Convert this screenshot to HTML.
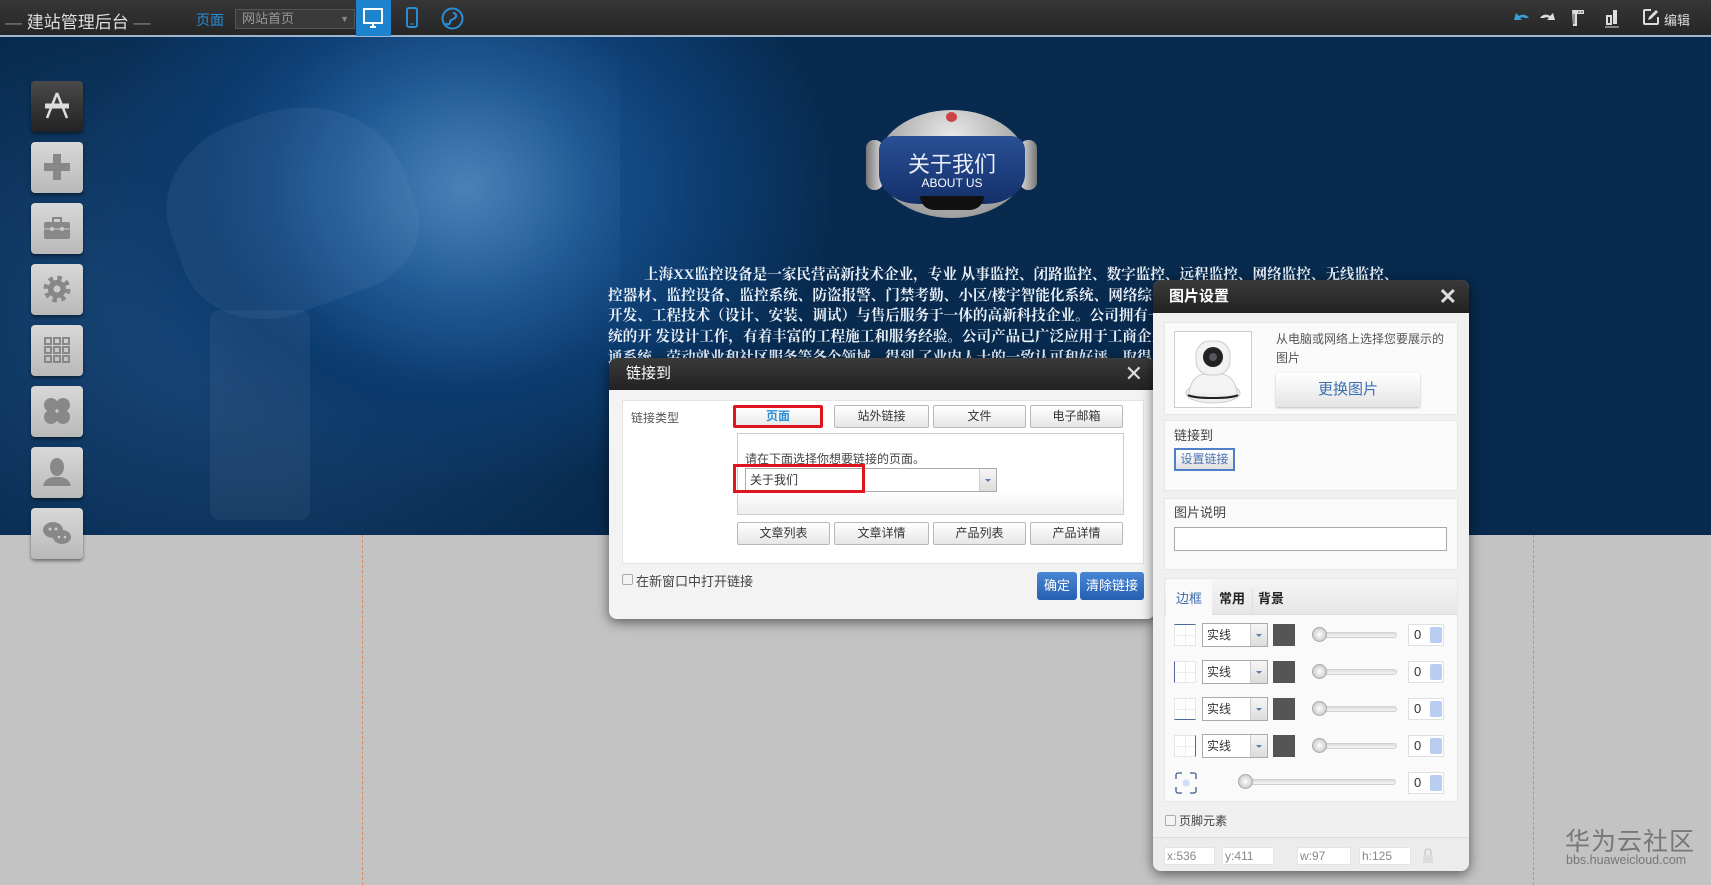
<!DOCTYPE html>
<html><head><meta charset="utf-8"><style>
*{margin:0;padding:0;box-sizing:border-box}
body{width:1711px;height:885px;overflow:hidden;position:relative;background:#c3c3c3;font-family:"Liberation Sans","Noto Sans CJK SC",sans-serif;font-size:12px;color:#333}
.a{position:absolute}
#hdr{left:0;top:0;width:1711px;height:37px;background:linear-gradient(#363636,#262626);border-bottom:2px solid #9fb6cc}
#banner{left:0;top:37px;width:1711px;height:498px;background:radial-gradient(ellipse 380px 300px at 460px 150px,#2e6aa4 0%,#17508c 35%,#0b3a6c 70%,rgba(6,40,77,0) 100%),radial-gradient(ellipse 450px 320px at 230px 280px,#1a4a7e 0%,rgba(8,45,85,0) 100%),#072a4e}
.side{left:31px;width:52px;height:51px;border-radius:4px;background:linear-gradient(#d8d8d8,#b9b9b9);box-shadow:0 2px 3px rgba(0,0,0,.45)}
.side svg{position:absolute;left:10px;top:9px}
.dash{top:535px;height:350px;border-left:1px dashed #d98c62}
.dlg{background:#f3f3f3;border-radius:8px;box-shadow:0 3px 12px rgba(0,0,0,.55);overflow:hidden}
.dt{height:32px;background:linear-gradient(#3a3a3a,#222);color:#fff;font-size:15px;line-height:32px;padding-left:17px}
.x{position:absolute;right:12px;top:0;color:#ddd;font-size:22px;line-height:32px}
.btn{position:absolute;height:23px;border:1px solid #b8b8b8;border-radius:2px;background:linear-gradient(#fff,#e6e6e6);text-align:center;line-height:21px;font-size:12px;color:#333}
.sec{position:absolute;background:#fafafa;border:1px solid #e6e6e6}
.sel{position:absolute;height:24px;border:1px solid #aaa;background:#fff;font-size:12px;line-height:22px;padding-left:4px}
.sel:after{content:"";position:absolute;right:0;top:0;width:16px;height:22px;border-left:1px solid #ccc;background:linear-gradient(#f6f6f6,#dcdcdc)}
.sel:before{content:"";position:absolute;right:5px;top:10px;border:3px solid transparent;border-top:3px solid #5a7fa8;z-index:2}
.sq{position:absolute;width:22px;height:22px;background:#555}
.sl{position:absolute;height:6px;border-radius:3px;background:linear-gradient(#ddd,#f4f4f4);border:1px solid #d0d0d0}
.kn{position:absolute;left:-4px;top:-6px;width:15px;height:15px;border-radius:50%;background:radial-gradient(#fff,#bbb);border:1px solid #aaa}
.num{position:absolute;width:36px;height:22px;background:#fff;border:1px solid #e0e0e0;font-size:13px;line-height:20px;padding-left:5px}
.num i{position:absolute;right:1px;top:2px;width:12px;height:16px;background:#b9cdf0;border-radius:2px}
.bi{position:absolute;width:22px;height:22px;border:1px solid #e6e6e6;background:linear-gradient(90deg,transparent 10px,#eee 10px,#eee 11px,transparent 11px),linear-gradient(transparent 10px,#eee 10px,#eee 11px,transparent 11px),#fff}
.inp{position:absolute;height:18px;background:#fff;border:1px solid #e4e4e4;color:#888;font-size:12px;line-height:16px;padding-left:2px}
</style></head><body>
<div id="banner" class="a"></div>
<div class="a" style="left:0;top:37px;width:620px;height:498px;background:radial-gradient(circle at 470px 150px,rgba(160,200,240,.25) 0,rgba(120,170,220,.1) 120px,transparent 200px)"></div>
<div class="a" style="left:170px;top:110px;width:240px;height:200px;border-radius:40% 50% 30% 40%;background:rgba(140,170,210,.1);transform:rotate(-20deg)"></div>
<div class="a" style="left:210px;top:310px;width:100px;height:210px;background:rgba(140,160,190,.1);border-radius:10px"></div>
<div id="hdr" class="a"></div>
<div class="a" style="left:5px;top:8px;color:#ddd;font-size:17px;white-space:nowrap"><span style="color:#888">—</span> 建站管理后台 <span style="color:#888">—</span></div>
<div class="a" style="left:196px;top:10px;color:#2a8ed6;font-size:14px">页面</div>
<div class="a" style="left:235px;top:9px;width:120px;height:20px;background:#3a3a3a;border:1px solid #555;color:#999;font-size:13px;line-height:18px;padding-left:6px">网站首页<span style="position:absolute;right:5px;top:0;font-size:9px;color:#888">▼</span></div>
<div class="a" style="left:356px;top:0;width:35px;height:36px;background:#1e83cf"></div>
<svg class="a" style="left:362px;top:7px" width="22" height="22" viewBox="0 0 22 22"><rect x="2" y="2" width="18" height="14" fill="none" stroke="#fff" stroke-width="2"/><path d="M8 20h6M11 16v4" stroke="#fff" stroke-width="2"/></svg>
<svg class="a" style="left:405px;top:7px" width="14" height="22"><rect x="2" y="1" width="10" height="19" rx="2" fill="none" stroke="#2a8ed6" stroke-width="2"/><path d="M5 17h4" stroke="#2a8ed6"/></svg>
<svg class="a" style="left:441px;top:7px" width="23" height="23"><circle cx="11.5" cy="11.5" r="10" fill="none" stroke="#2a8ed6" stroke-width="2"/><path d="M12 6c3 0 4 3 2 5s-5 1-5 4-3 3-4 1" fill="none" stroke="#2a8ed6" stroke-width="2"/></svg>
<svg class="a" style="left:1512px;top:10px" width="18" height="14"><path d="M2 10l2-7 3 3c3-2 7-2 10 2h-4c-2-1-3-1-5 0l2 2z" fill="#3aa0d8"/></svg>
<svg class="a" style="left:1539px;top:10px" width="18" height="14"><path d="M16 10l-2-7-3 3c-3-2-7-2-10 2h4c2-1 3-1 5 0l-2 2z" fill="#ddd"/></svg>
<svg class="a" style="left:1570px;top:8px" width="16" height="20"><path d="M2 2h12v4H7v12H3z" fill="#ddd"/><path d="M4 6v10M9 3v2M12 3v2" stroke="#444"/></svg>
<svg class="a" style="left:1604px;top:8px" width="16" height="20"><rect x="3" y="8" width="4" height="8" fill="none" stroke="#ddd" stroke-width="2"/><rect x="9" y="2" width="4" height="14" fill="#ddd"/><path d="M1 19h14" stroke="#ddd"/></svg>
<svg class="a" style="left:1642px;top:8px" width="18" height="18"><path d="M9 2H3a1 1 0 0 0-1 1v12a1 1 0 0 0 1 1h12a1 1 0 0 0 1-1V9" fill="none" stroke="#ddd" stroke-width="2"/><path d="M6 12l1-3 7-7 2 2-7 7z" fill="#ddd"/></svg>
<div class="a" style="left:1664px;top:10px;color:#ddd;font-size:13px">编辑</div>

<!-- sidebar -->
<div class="a side" style="top:81px;background:linear-gradient(#4a4a4a,#222)"><svg width="32" height="32" viewBox="0 0 32 32"><path d="M16 3L6 28M16 3l10 25" stroke="#ddd" stroke-width="2.5"/><path d="M4 16h24" stroke="#ddd" stroke-width="5"/></svg></div>
<div class="a side" style="top:142px"><svg width="32" height="32"><path d="M16 3v26M3 16h26" stroke="#888" stroke-width="8"/></svg></div>
<div class="a side" style="top:203px"><svg width="32" height="32"><rect x="3" y="10" width="26" height="17" rx="2" fill="#888"/><path d="M12 10V6h8v4" fill="none" stroke="#888" stroke-width="2"/><path d="M3 17h26" stroke="#ccc"/><circle cx="11" cy="17" r="2" fill="#ccc"/><circle cx="21" cy="17" r="2" fill="#ccc"/></svg></div>
<div class="a side" style="top:264px"><svg width="32" height="32"><circle cx="16" cy="16" r="10" fill="none" stroke="#888" stroke-width="7" stroke-dasharray="4 3.85"/><circle cx="16" cy="16" r="9" fill="#888"/><circle cx="16" cy="16" r="3.5" fill="#ccc"/></svg></div>
<div class="a side" style="top:325px"><svg width="32" height="32" fill="none" stroke="#888" stroke-width="2"><rect x="4" y="4" width="6" height="6"/><rect x="13" y="4" width="6" height="6"/><rect x="22" y="4" width="6" height="6"/><rect x="4" y="13" width="6" height="6"/><rect x="13" y="13" width="6" height="6"/><rect x="22" y="13" width="6" height="6"/><rect x="4" y="22" width="6" height="6"/><rect x="13" y="22" width="6" height="6"/><rect x="22" y="22" width="6" height="6"/></svg></div>
<div class="a side" style="top:386px"><svg width="32" height="32" fill="#888"><ellipse cx="10" cy="10" rx="7" ry="7"/><ellipse cx="22" cy="10" rx="7" ry="7"/><ellipse cx="10" cy="22" rx="7" ry="7"/><ellipse cx="22" cy="22" rx="7" ry="7"/></svg></div>
<div class="a side" style="top:447px"><svg width="32" height="32" fill="#888"><ellipse cx="16" cy="11" rx="7" ry="9"/><path d="M2 30c2-8 8-9 14-9s12 1 14 9z"/></svg></div>
<div class="a side" style="top:508px"><svg width="32" height="32" fill="#888"><ellipse cx="12" cy="13" rx="10" ry="8"/><ellipse cx="21" cy="20" rx="9" ry="7"/><circle cx="9" cy="12" r="1.5" fill="#ccc"/><circle cx="15" cy="12" r="1.5" fill="#ccc"/><circle cx="18" cy="20" r="1.3" fill="#ccc"/><circle cx="24" cy="20" r="1.3" fill="#ccc"/></svg></div>

<!-- robot -->
<div class="a" style="left:877px;top:110px;width:150px;height:108px;border-radius:50%;background:radial-gradient(ellipse at 50% 30%,#eee,#a0a0a0 70%,#666)"></div>
<div class="a" style="left:866px;top:140px;width:17px;height:50px;border-radius:8px;background:linear-gradient(90deg,#777,#ddd)"></div>
<div class="a" style="left:1020px;top:140px;width:17px;height:50px;border-radius:8px;background:linear-gradient(90deg,#ddd,#777)"></div>
<div class="a" style="left:879px;top:136px;width:146px;height:68px;border-radius:14px 14px 40px 40px/14px 14px 30px 30px;background:linear-gradient(#2a4f95,#13306a)"></div>
<div class="a" style="left:920px;top:196px;width:64px;height:14px;border-radius:0 0 30px 30px;background:#111"></div>
<div class="a" style="left:946px;top:112px;width:11px;height:10px;border-radius:50%;background:#c44"></div>
<div class="a" style="left:879px;top:147px;width:146px;text-align:center;color:#e8eef8;font-size:22px">关于我们</div>
<div class="a" style="left:879px;top:176px;width:146px;text-align:center;color:#fff;font-size:12px">ABOUT US</div>

<div class="a" style="left:608px;top:265px;width:784px;height:110px;overflow:hidden;color:#eaf0f8;font-family:'Liberation Serif','Noto Serif CJK SC',serif;font-weight:bold;font-size:14.6px;line-height:20.7px;white-space:nowrap">
<div style="padding-left:36px">上海XX监控设备是一家民营高新技术企业，专业 从事监控、闭路监控、数字监控、远程监控、网络监控、无线监控、监</div>
<div>控器材、监控设备、监控系统、防盗报警、门禁考勤、小区/楼宇智能化系统、网络综合布线系统、安防监控工程等研究</div>
<div>开发、工程技术（设计、安装、调试）与售后服务于一体的高新科技企业。公司拥有一支专业的技术队伍，从事监控系</div>
<div>统的开 发设计工作，有着丰富的工程施工和服务经验。公司产品已广泛应用于工商企业、学校、医院、银行、政府、交</div>
<div>通系统、劳动就业和社区服务等各个领域，得到 了业内人士的一致认可和好评，取得了良好的社会效益和经济效益。</div>
</div>

<div class="a dash" style="left:362px"></div>
<div class="a dash" style="left:1533px"></div>

<!-- link dialog -->
<div class="a dlg" style="left:609px;top:358px;width:546px;height:261px">
<div class="dt">链接到<span class="x">✕</span></div>
<div class="a" style="left:13px;top:42px;width:522px;height:164px;background:#fff;border:1px solid #e4e4e4"></div>
<div class="a" style="left:22px;top:51px;color:#555">链接类型</div>
<div class="a" style="left:128px;top:75px;width:387px;height:82px;border:1px solid #ccc;background:linear-gradient(#fff 70%,#eee)"></div>
<div class="btn" style="left:124px;top:47px;width:90px;color:#2a8ed6;font-weight:bold;border:3px solid #e0141e;line-height:17px;background:linear-gradient(#fff,#eaeaea)">页面</div>
<div class="btn" style="left:225px;top:47px;width:95px">站外链接</div>
<div class="btn" style="left:324px;top:47px;width:93px">文件</div>
<div class="btn" style="left:421px;top:47px;width:93px">电子邮箱</div>
<div class="a" style="left:136px;top:92px;color:#444">请在下面选择你想要链接的页面。</div>
<div class="sel" style="left:136px;top:110px;width:252px">关于我们</div>
<div class="a" style="left:124px;top:106px;width:132px;height:29px;border:3px solid #e0141e"></div>
<div class="btn" style="left:128px;top:164px;width:93px">文章列表</div>
<div class="btn" style="left:225px;top:164px;width:95px">文章详情</div>
<div class="btn" style="left:324px;top:164px;width:93px">产品列表</div>
<div class="btn" style="left:421px;top:164px;width:93px">产品详情</div>
<div class="a" style="left:13px;top:216px;width:11px;height:11px;border:1px solid #aaa;background:#f4f4f4;border-radius:2px"></div>
<div class="a" style="left:27px;top:213px;color:#444;font-size:13px">在新窗口中打开链接</div>
<div class="a" style="left:428px;top:214px;width:40px;height:28px;border-radius:3px;background:linear-gradient(#4a86d6,#245fb0);color:#fff;font-size:13px;text-align:center;line-height:28px">确定</div>
<div class="a" style="left:471px;top:214px;width:64px;height:28px;border-radius:3px;background:linear-gradient(#4a86d6,#245fb0);color:#fff;font-size:13px;text-align:center;line-height:28px">清除链接</div>
</div>

<!-- image settings -->
<div class="a dlg" style="left:1153px;top:280px;width:316px;height:591px;background:#f0f0f0">
<div class="dt" style="height:33px;line-height:33px;font-size:15px;padding-left:16px;font-weight:bold">图片设置<span class="x" style="line-height:33px">✕</span></div>
<div class="sec" style="left:11px;top:42px;width:294px;height:93px"></div>
<div class="a" style="left:21px;top:51px;width:78px;height:77px;border:1px solid #ccc;background:#fff"></div>
<svg class="a" style="left:30px;top:55px" width="60" height="70"><ellipse cx="30" cy="58" rx="27" ry="10" fill="#eee" stroke="#ccc"/><path d="M6 58c2-14 8-20 24-20s22 6 24 20" fill="#f4f4f4" stroke="#ccc"/><path d="M5 60c6 4 44 4 50 0" stroke="#222" stroke-width="2" fill="none"/><rect x="13" y="6" width="34" height="34" rx="14" fill="#f2f2f2" stroke="#ccc"/><circle cx="30" cy="22" r="10" fill="#222"/><circle cx="30" cy="22" r="4" fill="#556"/></svg>
<div class="a" style="left:123px;top:50px;color:#555;font-size:12px;line-height:19px;width:180px">从电脑或网络上选择您要展示的<br>图片</div>
<div class="a" style="left:123px;top:93px;width:144px;height:34px;background:linear-gradient(#fff,#e4e4e4);border-radius:2px;box-shadow:0 1px 2px rgba(0,0,0,.25);color:#3a6fb0;font-size:15px;text-align:center;line-height:34px">更换图片</div>
<div class="sec" style="left:11px;top:140px;width:294px;height:71px"></div>
<div class="a" style="left:21px;top:145px;color:#444;font-size:13px">链接到</div>
<div class="a" style="left:21px;top:168px;width:61px;height:23px;border:2px solid #4f7fc6;background:linear-gradient(#fff,#e0e0e0);color:#4a74b4;font-size:12px;text-align:center;line-height:19px">设置链接</div>
<div class="sec" style="left:11px;top:218px;width:294px;height:72px"></div>
<div class="a" style="left:21px;top:222px;color:#444;font-size:13px">图片说明</div>
<div class="a" style="left:21px;top:247px;width:273px;height:24px;border:1px solid #aaa;background:#fff"></div>
<div class="sec" style="left:11px;top:298px;width:294px;height:224px;background:#fafafa"></div>
<div class="a" style="left:12px;top:299px;width:292px;height:36px;background:linear-gradient(#f6f6f6,#e6e6e6);border-bottom:1px solid #ddd"></div>
<div class="a" style="left:13px;top:299px;width:46px;height:37px;background:#fafafa"></div>
<div class="a" style="left:23px;top:308px;color:#3a6aa8;font-size:13px">边框</div>
<div class="a" style="left:66px;top:308px;color:#222;font-size:13px;font-weight:bold">常用</div>
<div class="a" style="left:99px;top:308px;color:#222;font-size:13px;font-weight:bold;border-left:1px solid #e0e0e0;padding:0 8px 10px 5px">背景</div>

<div class="bi" style="left:21px;top:344px;border-top:1px solid #4a6a9a"></div>
<div class="sel" style="left:49px;top:343px;width:66px">实线</div>
<div class="sq" style="left:120px;top:344px"></div>
<div class="sl" style="left:162px;top:352px;width:82px"><div class="kn"></div></div>
<div class="num" style="left:255px;top:344px">0<i></i></div>

<div class="bi" style="left:21px;top:381px;border-left:1px solid #4a6a9a"></div>
<div class="sel" style="left:49px;top:380px;width:66px">实线</div>
<div class="sq" style="left:120px;top:381px"></div>
<div class="sl" style="left:162px;top:389px;width:82px"><div class="kn"></div></div>
<div class="num" style="left:255px;top:381px">0<i></i></div>

<div class="bi" style="left:21px;top:418px;border-bottom:1px solid #4a6a9a"></div>
<div class="sel" style="left:49px;top:417px;width:66px">实线</div>
<div class="sq" style="left:120px;top:418px"></div>
<div class="sl" style="left:162px;top:426px;width:82px"><div class="kn"></div></div>
<div class="num" style="left:255px;top:418px">0<i></i></div>

<div class="bi" style="left:21px;top:455px;border-right:1px solid #4a6a9a"></div>
<div class="sel" style="left:49px;top:454px;width:66px">实线</div>
<div class="sq" style="left:120px;top:455px"></div>
<div class="sl" style="left:162px;top:463px;width:82px"><div class="kn"></div></div>
<div class="num" style="left:255px;top:455px">0<i></i></div>

<svg class="a" style="left:21px;top:491px" width="24" height="24"><path d="M2 8V4a2 2 0 0 1 2-2h4M16 2h4a2 2 0 0 1 2 2v4M22 16v4a2 2 0 0 1-2 2h-4M8 22H4a2 2 0 0 1-2-2v-4" fill="none" stroke="#3a5a8a" stroke-width="1.3"/><circle cx="12" cy="12" r="3.5" fill="#cfe0f4"/></svg>
<div class="sl" style="left:88px;top:499px;width:155px"><div class="kn"></div></div>
<div class="num" style="left:255px;top:492px">0<i></i></div>

<div class="a" style="left:12px;top:535px;width:11px;height:11px;border:1px solid #aaa;background:#f4f4f4;border-radius:2px"></div>
<div class="a" style="left:26px;top:532px;color:#444;font-size:12px">页脚元素</div>
<div class="a" style="left:0;top:557px;width:316px;height:34px;background:#ececec;border-top:1px solid #ddd"></div>
<div class="inp" style="left:11px;top:567px;width:51px">x:536</div>
<div class="inp" style="left:69px;top:567px;width:52px">y:411</div>
<div class="inp" style="left:144px;top:567px;width:54px">w:97</div>
<div class="inp" style="left:206px;top:567px;width:52px">h:125</div>
<svg class="a" style="left:268px;top:568px" width="14" height="16"><path d="M4 7V4a3 3 0 0 1 6 0v3" fill="none" stroke="#ccc" stroke-width="1.5"/><rect x="2" y="7" width="10" height="8" fill="#ddd"/></svg>
</div>

<div class="a" style="left:1565px;top:822px;color:#777;font-size:25px;letter-spacing:1px">华为云社区</div>
<div class="a" style="left:1566px;top:853px;color:#777;font-size:12.5px">bbs.huaweicloud.com</div>
</body></html>
